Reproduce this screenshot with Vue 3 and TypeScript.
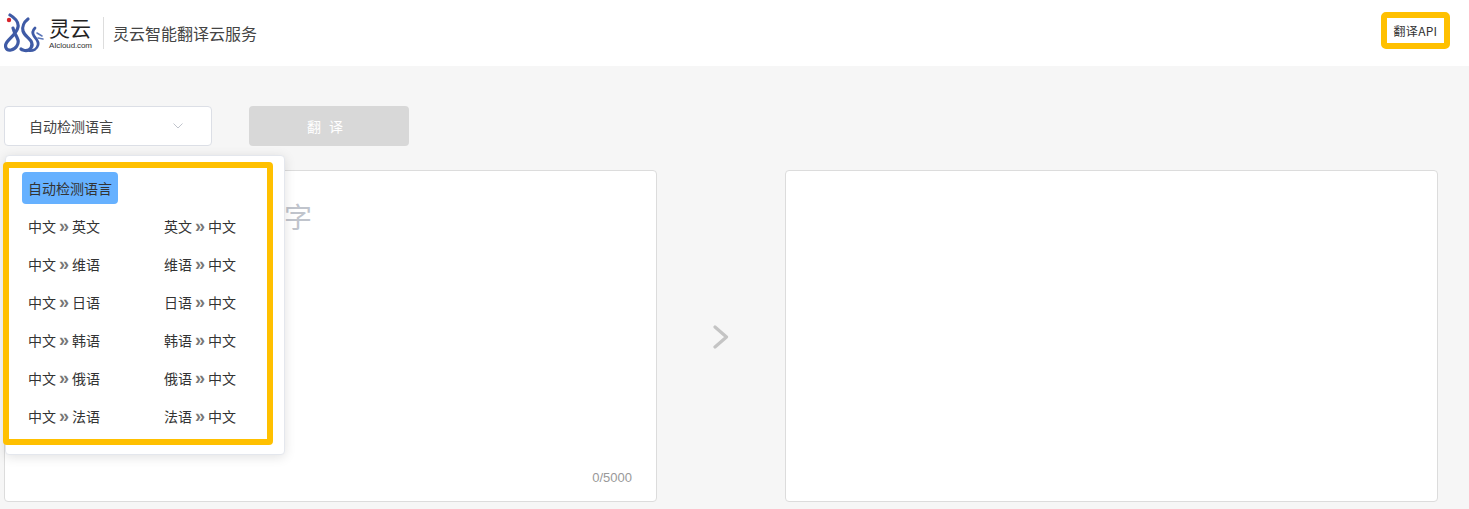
<script setup lang="ts">
const pairs = ['英文', '维语', '日语', '韩语', '俄语', '法语']
</script>

<template>
  <div class="page">
    <header class="header">
      <div class="brand">
        <svg class="logo" width="40" height="40" viewBox="0 0 40 40" fill="none">
          <path d="M6 2 C11 5 15 9 14 14 C13 20 7 24 3 29 C0 33 2 38 7 37 C12 36 15 31 14 27 C13 23 10 20 9 15" stroke="#3f5ba6" stroke-width="3.2" stroke-linecap="round" />
          <path d="M24 6 C20 9 18 14 19 18 C20 22 24 24 27 28 C30 33 26 38 21 37.5 C19 37 18 37 17 36" stroke="#3f5ba6" stroke-width="3.2" stroke-linecap="round" />
          <path d="M31 15 C29 17 28 20 30 23 C32 26 35 28 34 32 C33 36 29 38 25 37.5" stroke="#3f5ba6" stroke-width="2.8" stroke-linecap="round" />
          <path d="M33 20 L38 23 M34 25 L39 26" stroke="#5c77b8" stroke-width="1.5" stroke-linecap="round" />
          <circle cx="5" cy="7" r="2.2" fill="#d8232a" />
        </svg>
        <div class="logo-text">
          <span class="logo-name">灵云</span>
          <span class="logo-site">AIcloud.com</span>
        </div>
        <span class="divider"></span>
        <span class="title">灵云智能翻译云服务</span>
      </div>
      <a class="api-link">翻译API</a>
    </header>

    <main class="main">
      <div class="toolbar">
        <div class="select-wrap">
          <div class="select">
            <span>自动检测语言</span>
            <svg class="select-arrow" width="10" height="6" viewBox="0 0 10 6" fill="none">
              <path d="M0.5 0.5 L5 5 L9.5 0.5" stroke="#c0c4cc" stroke-width="1" />
            </svg>
          </div>

          <!-- 语言下拉 -->
          <div class="dropdown">
            <span class="highlight"></span>
            <div class="auto-row">
              <span class="auto-chip">自动检测语言</span>
            </div>
            <div class="lang-grid">
              <template v-for="lang in pairs" :key="lang">
                <span class="lang-item">中文<i class="sep">»</i>{{ lang }}</span>
                <span class="lang-item">{{ lang }}<i class="sep">»</i>中文</span>
              </template>
            </div>
          </div>
        </div>
        <button class="translate-btn" disabled>翻 译</button>
      </div>

      <div class="panels">
        <div class="panel source">
          <span class="placeholder">请输入需要翻译的文字</span>
          <span class="counter">0/5000</span>
        </div>
        <div class="arrow-col">
          <svg width="16" height="24" viewBox="0 0 16 24" fill="none">
            <path d="M2 2 L13.5 12 L2 22" stroke="#c4c4c4" stroke-width="3.2" stroke-linecap="round" stroke-linejoin="round" />
          </svg>
        </div>
        <div class="panel"></div>
      </div>
    </main>
  </div>
</template>

<style>
html,
body {
  margin: 0;
  background: #f6f6f6;
}
</style>

<style scoped>
.page {
  height: 509px;
  overflow: hidden;
  background: #f6f6f6;
  font-family: "Noto Sans CJK SC", "Liberation Sans", sans-serif;
  color: #333;
}

.header {
  height: 66px;
  background: #fff;
  display: flex;
  align-items: center;
  justify-content: space-between;
  padding: 0 19px 0 4px;
  box-sizing: border-box;
}

.brand {
  display: flex;
  align-items: center;
}

.logo {
  margin-right: 5px;
}

.logo-text {
  display: flex;
  flex-direction: column;
  width: 54px;
}

.logo-name {
  font-size: 21px;
  line-height: 24px;
  color: #222;
}

.logo-site {
  font-family: "Liberation Sans", sans-serif;
  font-size: 8px;
  line-height: 11px;
  margin-top: 1px;
  letter-spacing: -0.1px;
  color: #333;
}

.divider {
  width: 1px;
  height: 32px;
  background: #ddd;
  margin-right: 9px;
}

.title {
  font-size: 16px;
  color: #444;
}

.api-link {
  width: 69px;
  height: 37px;
  margin-bottom: 5px;
  box-sizing: border-box;
  border: 6px solid #ffc000;
  border-radius: 5px;
  display: flex;
  align-items: center;
  justify-content: center;
  font-size: 12px;
  letter-spacing: 0.3px;
  color: #333;
}

.main {
  padding: 40px 0 0 4px;
}

.toolbar {
  display: flex;
  gap: 37px;
  margin-bottom: 24px;
}

.select-wrap {
  position: relative;
}

.select {
  width: 208px;
  height: 40px;
  box-sizing: border-box;
  background: #fff;
  border: 1px solid #dcdfe6;
  border-radius: 4px;
  display: flex;
  align-items: center;
  justify-content: space-between;
  padding: 0 28px 0 24px;
  font-size: 14px;
  color: #444;
}

.dropdown {
  position: absolute;
  top: 49px;
  left: 1px;
  z-index: 2;
  width: 280px;
  height: 300px;
  box-sizing: border-box;
  background: #fff;
  border: 1px solid #e4e7ed;
  border-radius: 4px;
  box-shadow: 0 2px 12px rgba(0, 0, 0, 0.12);
  padding: 16px 16px 0;
}

.highlight {
  position: absolute;
  left: -3px;
  top: 6px;
  width: 270px;
  height: 283px;
  box-sizing: border-box;
  border: 6px solid #ffc000;
  border-radius: 4px;
}

.auto-row {
  height: 32px;
  margin-bottom: 3px;
}

.auto-chip {
  display: inline-block;
  height: 32px;
  line-height: 32px;
  padding: 0 6px;
  border-radius: 4px;
  background: #66b1ff;
  font-size: 14px;
  color: #333;
}

.lang-grid {
  display: grid;
  grid-template-columns: 136px 100px;
  grid-auto-rows: 38px;
  padding-left: 6px;
}

.lang-item {
  display: flex;
  align-items: center;
  font-size: 14px;
  color: #333;
}

.sep {
  width: 16px;
  text-align: center;
  font-family: "Liberation Sans", sans-serif;
  font-style: normal;
  font-weight: 700;
  font-size: 18px;
  line-height: 16px;
  color: #777;
}

.translate-btn {
  width: 160px;
  height: 40px;
  border: none;
  border-radius: 4px;
  background: #d8d8d8;
  color: #fff;
  font-family: inherit;
  font-size: 14px;
  padding: 0 8px 0 0;
  white-space: pre;
  word-spacing: 5px;
}

.panels {
  display: grid;
  grid-template-columns: 653px 128px 653px;
}

.panel {
  position: relative;
  height: 332px;
  box-sizing: border-box;
  background: #fff;
  border: 1px solid #dcdcdc;
  border-radius: 4px;
}

.placeholder {
  position: absolute;
  left: 27px;
  top: 25px;
  font-size: 28px;
  line-height: 40px;
  color: #c0c4cc;
}

.counter {
  position: absolute;
  right: 24px;
  bottom: 15px;
  font-family: "Liberation Sans", sans-serif;
  font-size: 13px;
  line-height: 16px;
  color: #999;
}

.arrow-col {
  display: flex;
  align-items: center;
  justify-content: center;
  padding-top: 2px;
}
</style>
